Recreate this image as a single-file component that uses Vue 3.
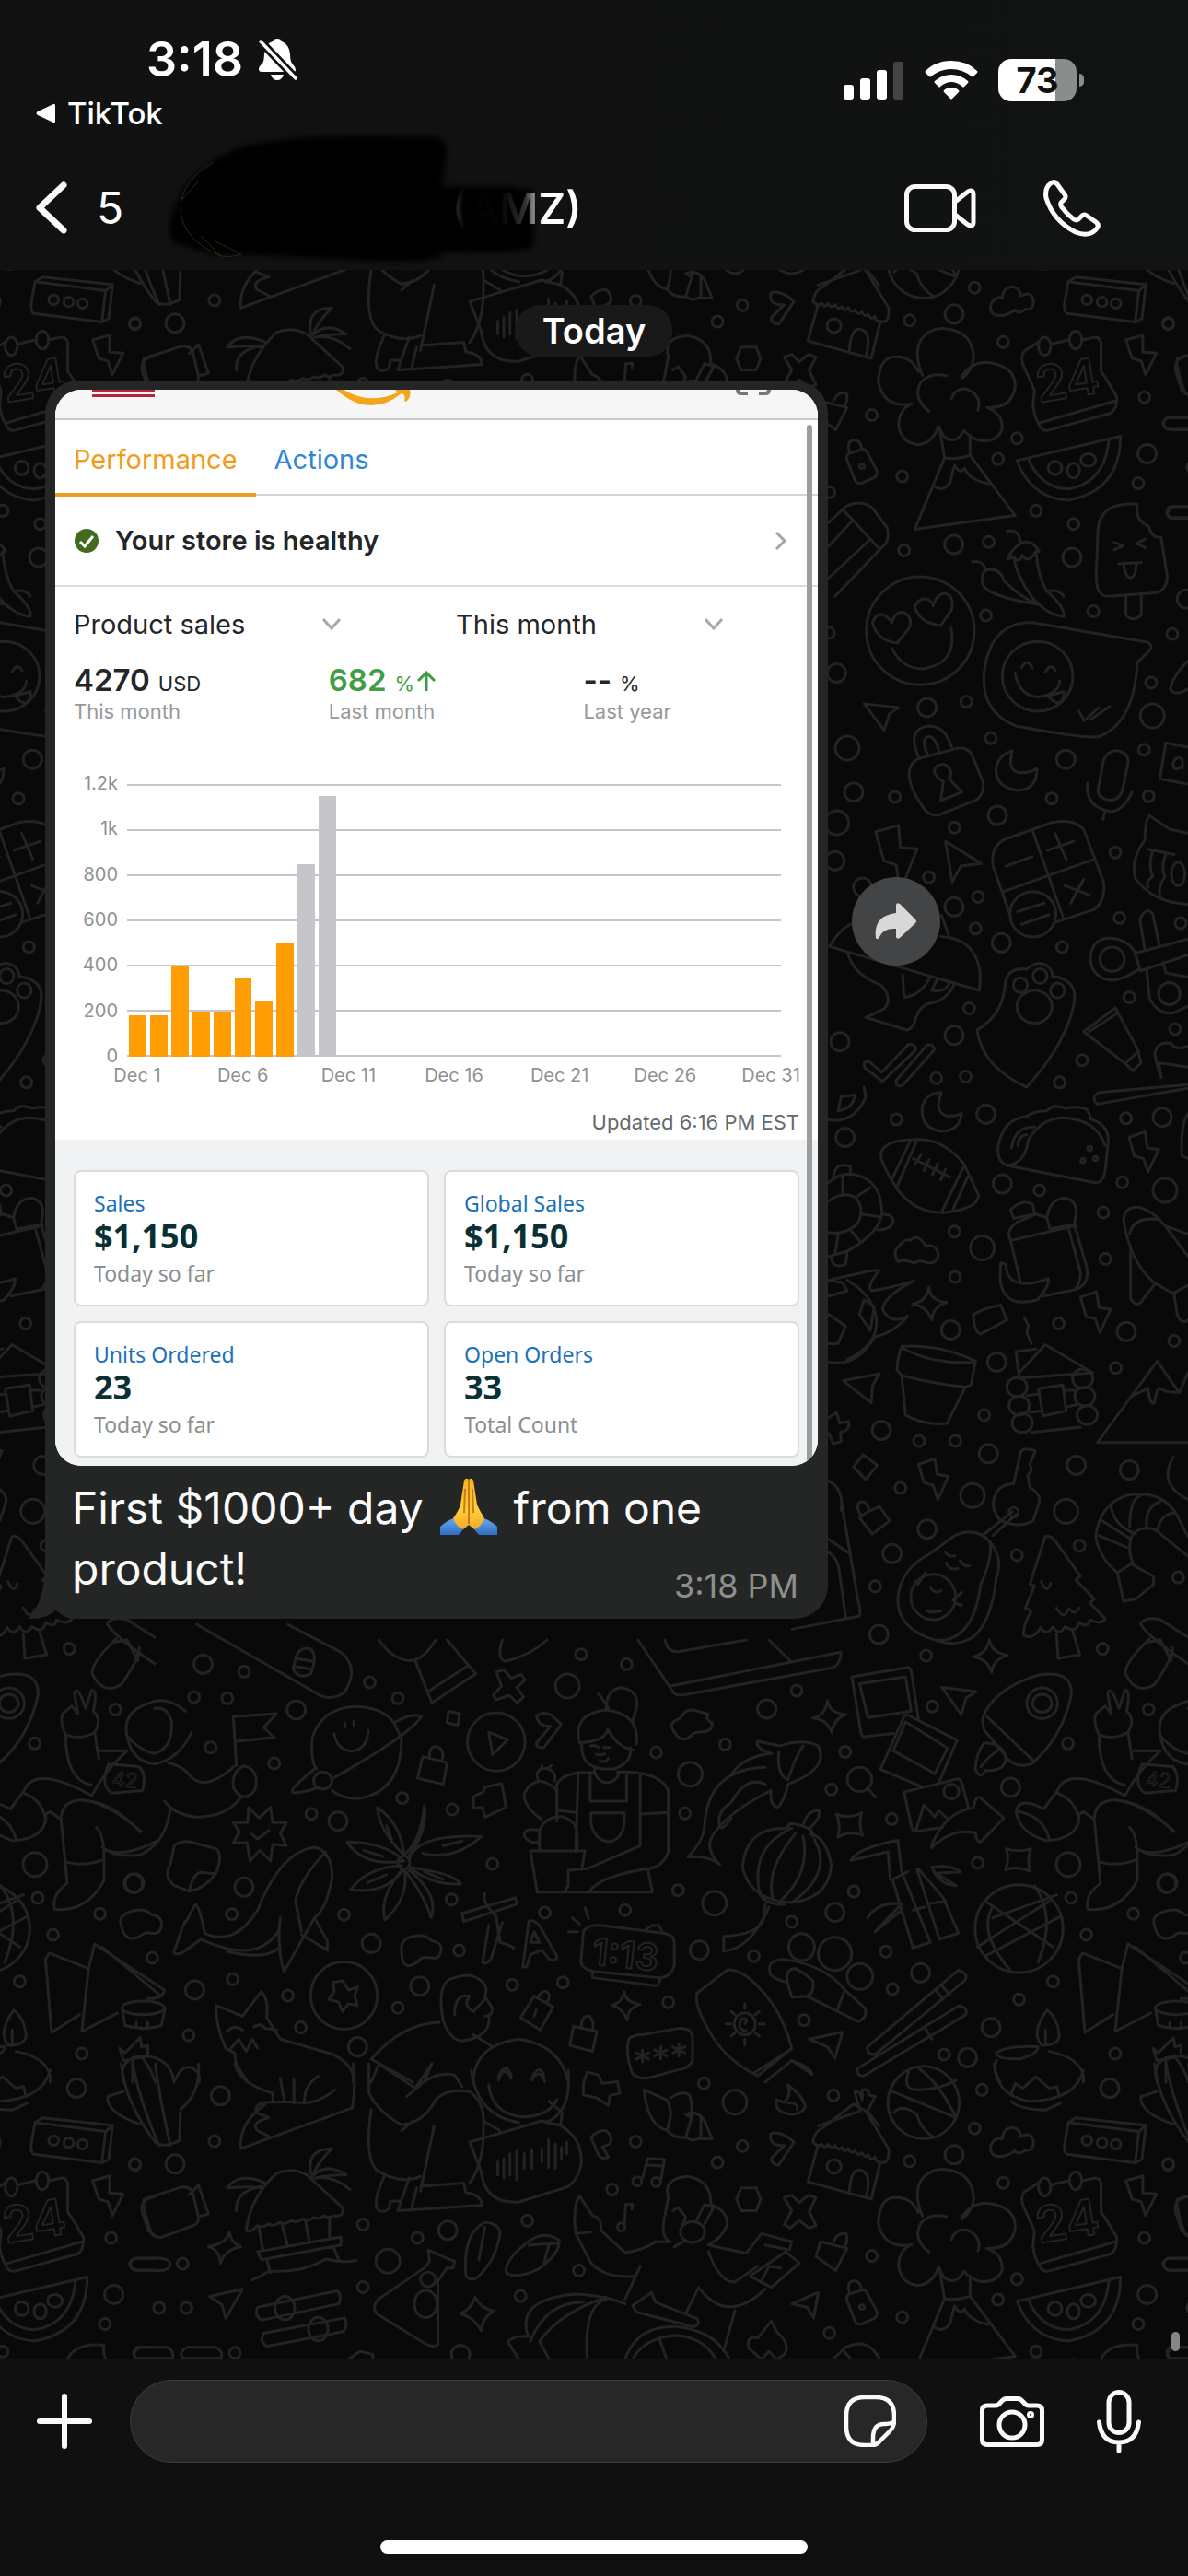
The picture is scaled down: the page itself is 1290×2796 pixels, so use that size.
<template>
  <main class="phone">
    <header class="top">
      <div class="status">
        <div class="status-left">
          <div class="clock">
            <time>3:18</time>
            <!-- 静音铃铛 -->
            <svg class="bell" viewBox="0 0 42 46" aria-hidden="true">
              <path fill="#fff" d="M12 5Q14 4 16 3Q17 0 21 0T26 3Q34 6 35 17Q35 25 38 28Q41 31 41 34Q41 36 38 36H4Q1 36 1 33Q1 30 5 27Q7 24 7 15Z" />
              <path fill="#fff" d="M14 39H28Q26 45 21 45T14 39Z" />
              <path stroke="#111" stroke-width="9" d="M0 0L44 46" />
              <path stroke="#fff" stroke-width="3.4" stroke-linecap="round" d="M3 3L41 43" />
            </svg>
          </div>
          <a class="back-app" href="#">
            <svg viewBox="0 0 22 22" aria-hidden="true"><path fill="#fff" d="M19 1Q21 0 21 3V19Q21 22 19 21L2 13Q-1 11 2 9Z" /></svg>
            <span>TikTok</span>
          </a>
        </div>
        <div class="status-right">
          <svg class="signal" viewBox="0 0 65 42" aria-hidden="true">
            <rect x="0" y="26" width="11" height="16" rx="3" fill="#fff" />
            <rect x="18" y="19" width="11" height="23" rx="3" fill="#fff" />
            <rect x="36" y="10" width="11" height="32" rx="3" fill="#fff" />
            <rect x="54" y="1" width="11" height="41" rx="3" fill="#444" />
          </svg>
          <svg class="wifi" viewBox="0 0 58 42" aria-hidden="true">
            <path fill="#fff" d="M29 0Q46 0 57 11Q58 12 57 13L53 17Q52 18 51 17Q41 9 29 9T7 17Q6 18 5 17L1 13Q0 12 1 11Q12 0 29 0Z" />
            <path fill="#fff" d="M29 15Q39 15 47 22Q48 23 47 24L43 28Q42 29 41 28Q35 23 29 23T17 28Q16 29 15 28L11 24Q10 23 11 22Q19 15 29 15Z" />
            <path fill="#fff" d="M29 29Q34 29 37 32Q38 33 37 34L30 41Q29 42 28 41L21 34Q20 33 21 32Q24 29 29 29Z" />
          </svg>
          <div class="battery"><span>73</span></div>
        </div>
      </div>

      <nav class="nav">
        <button class="icon-btn back" aria-label="Back">
          <svg width="34" height="57" viewBox="0 0 34 57"><path d="M30 4L4 28.5L30 53" stroke-width="7" /></svg>
          <span>5</span>
        </button>
        <a class="contact" href="#">
          <svg class="scribble" viewBox="0 0 410 150" aria-hidden="true">
            <defs>
              <filter id="soft" x="-5%" y="-10%" width="110%" height="120%"><feGaussianBlur stdDeviation="3" /></filter>
            </defs>
            <path filter="url(#soft)" d="M18 58Q45 28 85 14Q150 0 260 4Q305 0 303 20L298 58L366 58L396 62L398 124Q380 132 300 130Q295 142 230 140L120 134L50 132L8 120Q-3 110 4 90Z" />
            <path class="avatar-rim" d="M50 32Q14 52 14 84Q16 116 58 134Q68 136 80 132M16 72L34 52M52 118L80 132M36 112L58 134" />
          </svg>
          <span class="contact-name">(AMZ)</span>
        </a>
        <button class="icon-btn" aria-label="Video call">
          <svg width="78" height="52" viewBox="0 0 78 52"><rect x="2.5" y="2.5" width="52" height="47" rx="9" /><path d="M55 19L69 8Q75 5 75 11V41Q75 47 69 44L55 33" /></svg>
        </button>
        <button class="icon-btn" aria-label="Voice call">
          <svg width="62" height="62" viewBox="0 0 62 62"><path d="M8 4Q12 1 15 5L23 16Q25 19 23 21L19 25Q18 27 20 30Q26 38 33 43Q36 45 38 43L42 39Q44 37 47 39L57 46Q61 49 58 53Q50 63 35 57Q11 45 3 20Q1 9 8 4Z" /></svg>
        </button>
      </nav>
    </header>

    <section class="chat">
      <!-- 聊天背景线稿：一块图案，上下左右平铺 -->
      <svg class="wallpaper" viewBox="0 293 1290 2268" preserveAspectRatio="xMidYMin slice" aria-hidden="true">
        <defs>
          <g id="tile">
            <g v-for="sheet in sheets" :key="sheet.id">
              <g :transform="`translate(${sheet.x} ${sheet.y}) scale(${sheet.sx} ${sheet.sy})`">
                <path v-for="(d, i) in sheet.paths" :key="i" :d="d" />
                <ellipse v-for="(e, i) in sheet.ovals" :key="i" :cx="e[0]" :cy="e[1]" :rx="e[2]" :ry="e[3]" />
              </g>
              <g v-for="ring in sheet.rings" :key="ring.r">
                <circle
                  v-for="(c, i) in ring.at"
                  :key="i"
                  :cx="sheet.x + c[0] * sheet.sx"
                  :cy="sheet.y + c[1] * sheet.sy"
                  :r="ring.r"
                />
              </g>
            </g>
            <text x="1128" y="437" font-size="54" transform="rotate(-9 1128 437)">24</text>
            <text class="thin" x="1243" y="1938" font-size="22" transform="rotate(6 1243 1938)">42</text>
            <text x="642" y="2132" font-size="40" transform="rotate(6 642 2132)">1:13</text>
          </g>
        </defs>
        <use v-for="(o, i) in offsets" :key="i" href="#tile" :x="o[0]" :y="o[1]" />
      </svg>

      <div class="day">Today</div>

      <div class="message">
        <article class="bubble">
          <svg class="tail" viewBox="0 0 50 60" aria-hidden="true"><path fill="#242625" d="M18 0Q18 40 0 60Q22 60 30 50Q38 60 50 60V0Z" /></svg>
          <div class="photo">
            <div class="brand">
              <span class="flag"></span>
              <svg class="smile" viewBox="0 0 82 18" aria-hidden="true"><path fill="#f3a51c" d="M0 0H8Q36 17 67 3L64 0H80Q82 8 76 13L74 12Q76 5 71 4Q36 32 0 0Z" /></svg>
              <svg class="scan" viewBox="0 0 38 6" aria-hidden="true"><path fill="none" stroke="#777" stroke-width="4" d="M2 0Q2 4 6 4H13M25 4H32Q36 4 36 0" /></svg>
            </div>
            <div class="tabs">
              <button class="tab on">Performance</button>
              <button class="tab">Actions</button>
            </div>
            <a class="health" href="#">
              <svg width="26" height="26" viewBox="0 0 26 26" aria-hidden="true"><circle cx="13" cy="13" r="13" fill="#426b1f" /><path d="M6 14L11 19L20 8" fill="none" stroke="#fff" stroke-width="3" /></svg>
              <span>Your store is healthy</span>
              <svg class="go" width="14" height="22" viewBox="0 0 14 22" aria-hidden="true"><path d="M2 2L11 11L2 20" fill="none" stroke="#a5a5a5" stroke-width="3" /></svg>
            </a>
            <div class="filters">
              <label v-for="f in filters" :key="f" class="filter">
                <select :aria-label="f"><option>{{ f }}</option></select>
                <svg width="20" height="13" viewBox="0 0 20 13" aria-hidden="true"><path d="M1 1L10 11L19 1" fill="none" stroke="#a8a8a8" stroke-width="3" /></svg>
              </label>
            </div>
            <div class="metrics">
              <div v-for="m in metrics" :key="m.note" class="metric">
                <p class="figure" :class="{ up: m.up }">
                  <b>{{ m.value }}</b> <small>{{ m.unit }}</small>
                  <svg v-if="m.up" width="20" height="22" viewBox="0 0 20 22" aria-hidden="true"><path d="M10 22V3M1 11L10 2L19 11" fill="none" stroke="#3f9e45" stroke-width="3" /></svg>
                </p>
                <p class="note">{{ m.note }}</p>
              </div>
            </div>
            <div class="chart">
              <div class="y-axis"><span v-for="y in yLabels" :key="y">{{ y }}</span></div>
              <div class="plot">
                <i v-for="y in yLabels" :key="y" class="line"></i>
                <div class="bars">
                  <div v-for="(v, i) in sales" :key="i" class="bar" :class="{ grey: i > 7 }" :style="{ height: v / 12 + '%' }"></div>
                </div>
              </div>
              <div class="x-axis"><span v-for="x in xLabels" :key="x">{{ x }}</span></div>
            </div>
            <p class="updated">Updated 6:16 PM EST</p>
            <div class="cards">
              <div v-for="c in cards" :key="c.title" class="card">
                <a href="#">{{ c.title }}</a>
                <strong>{{ c.value }}</strong>
                <span>{{ c.note }}</span>
              </div>
            </div>
            <span class="photo-scroll"></span>
          </div>
          <p class="caption">
            <span>First $1000+ day</span>
            <svg class="pray" viewBox="0 0 62 62" role="img" aria-label="🙏">
              <defs>
                <linearGradient id="skin" x2="0" y2="1"><stop stop-color="#f7b31c" /><stop offset=".6" stop-color="#ffcf3a" /><stop offset="1" stop-color="#f4a92a" /></linearGradient>
                <linearGradient id="cuff" x2="0" y2="1"><stop stop-color="#6aa9ee" /><stop offset="1" stop-color="#2d6cc0" /></linearGradient>
              </defs>
              <path fill="url(#cuff)" d="M0 53Q8 46 15 44L25 56L20 62H0ZM62 53Q54 46 47 44L37 56L42 62H62Z" />
              <path fill="url(#skin)" d="M26 3Q28-1 31 2Q34-1 36 3L40 29Q43 36 48 44Q45 53 37 56L31 51L25 56Q17 53 14 44Q20 36 22 29Z" />
              <path fill="none" stroke="#c9791a" stroke-width="2" d="M31 2V50M27 12L26 38M35 12L36 38" />
            </svg>
            <span>from one</span> <span>product!</span>
          </p>
          <time class="sent">3:18 PM</time>
        </article>
        <button class="forward" aria-label="Forward">
          <svg width="46" height="40" viewBox="0 0 46 40"><path fill="#d9d9da" d="M23 2Q24-1 27 1L44 18Q46 20 44 22L27 38Q24 40 23 37V28Q9 27 5 37Q3 41 1 38Q-2 14 23 11Z" /></svg>
        </button>
      </div>
      <span class="chat-scroll"></span>
    </section>

    <footer class="bottom">
      <div class="composer">
        <button class="icon-btn" aria-label="Attach">
          <svg width="60" height="60" viewBox="0 0 60 60"><path d="M30 3V57M3 30H57" stroke-width="6" /></svg>
        </button>
        <div class="field">
          <input type="text" aria-label="Message" />
          <button class="icon-btn" aria-label="Stickers">
            <svg width="56" height="56" viewBox="0 0 56 56"><path d="M30 54H22Q2 54 2 34V22Q2 2 22 2H34Q54 2 54 22V28Q54 34 49 39L39 49Q35 54 30 54ZM31 54V46Q31 31 43 31Q51 31 54 28" stroke-width="4.5" /></svg>
          </button>
        </div>
        <button class="icon-btn" aria-label="Camera">
          <svg width="70" height="55" viewBox="0 0 70 55"><path d="M8 10H17Q20 10 22 7L24 5Q26 2.500 29 2.500H41Q44 2.500 46 5L48 7Q50 10 53 10H62Q67.500 10 67.500 15V47Q67.500 52.500 62 52.500H8Q2.500 52.500 2.500 47V15Q2.500 10 8 10Z" /><circle cx="35" cy="31" r="14" /><circle cx="55" cy="20" r="1.500" /></svg>
        </button>
        <button class="icon-btn" aria-label="Record">
          <svg width="48" height="68" viewBox="0 0 48 68"><rect x="13" y="2.500" width="22" height="44" rx="11" /><path d="M2.500 35Q5 57 24 57T45.500 35M24 58V66" /></svg>
        </button>
      </div>
      <div class="home"></div>
    </footer>
  </main>
</template>

<script setup>
const filters = ['Product sales', 'This month']

const metrics = [
  { value: '4270', unit: 'USD', note: 'This month' },
  { value: '682', unit: '%', note: 'Last month', up: true },
  { value: '--', unit: '%', note: 'Last year' }
]

const yLabels = ['1.2k', '1k', '800', '600', '400', '200', '0']
const xLabels = ['Dec 1', 'Dec 6', 'Dec 11', 'Dec 16', 'Dec 21', 'Dec 26', 'Dec 31']
// 当月每日销售额，后面的日期还没有数据
const sales = [185, 185, 400, 200, 200, 350, 250, 500, 850, 1150, ...Array(21).fill(0)]

const cards = [
  { title: 'Sales', value: '$1,150', note: 'Today so far' },
  { title: 'Global Sales', value: '$1,150', note: 'Today so far' },
  { title: 'Units Ordered', value: '23', note: 'Today so far' },
  { title: 'Open Orders', value: '33', note: 'Total Count' }
]

// 图案每块 1122 x 1998
const offsets = [
  [0, 0], [-1122, 0], [1122, 0],
  [0, -1998], [-1122, -1998], [1122, -1998],
  [0, 1998], [-1122, 1998]
]

const sheets = [
  {
    id: 'sky',
    x: 860, y: 280, sx: 0.3333, sy: 0.574,
    paths: [
      // house
      'M68 82Q75 60 100 55L200 10L240 23L315 95Q318 125 290 120Q275 122 270 110Q258 120 248 106Q236 114 228 102Q214 110 205 98Q192 106 184 94Q172 104 162 92Q150 100 140 88Q128 98 118 86Q106 96 98 86Q82 92 68 82M85 88L52 157L258 190L288 120M187 178Q190 130 225 135Q260 140 242 185',
      // cloud
      'M660 108Q640 100 650 85Q665 72 685 76Q690 52 720 55Q745 57 745 72Q780 60 787 82Q785 100 760 97Q740 108 725 98Q700 112 660 108Z',
      'M900 45L925 36L1153 50L1140 115L1118 121L895 105Q885 100 888 85L900 45L1130 62L1118 121M1130 62L1153 50',
      // volcano
      'M425 222Q395 180 420 155Q450 130 505 134Q590 140 592 190Q585 215 555 227M552 225Q590 190 660 200Q730 210 727 245Q715 285 635 283Q690 295 684 325Q665 350 610 345Q580 340 560 326Q535 355 495 338L477 318Q460 350 410 353Q355 350 347 315Q350 285 390 276Q300 285 281 235Q285 185 340 187Q390 187 412 215M503 223Q450 215 420 235Q390 265 447 290M520 266Q530 245 570 248Q620 260 606 288',
      'M480 320L497 378L400 513L727 487L580 373V335M497 378Q540 382 580 373M460 430Q490 445 515 425Q525 400 530 392Q545 410 562 398Q580 420 640 427',
      // calendar
      'M805 158L755 177Q743 190 755 205L790 250L785 280Q790 300 805 315Q815 328 835 326L1040 293Q1060 285 1058 262L1020 225L1007 215V160Q1000 148 985 150L945 155M845 163L900 155M805 312L1055 270',
      'M733 383Q780 455 900 458Q1070 440 1070 337L733 383M770 380Q810 435 900 437Q1020 425 1033 342',
      'M1088 155L1143 146V178L1187 180L1152 221L1138 195L1108 190Z',
      'M178 380L205 420Q212 428 225 426L270 415Q280 410 275 400L245 368Q238 360 228 362L185 370Q176 374 178 380M188 368Q175 345 205 344Q228 348 226 362',
      'M120 500L175 470Q230 455 265 475L310 510Q318 530 305 540L140 640M165 475L285 550M120 545L195 498M120 605L250 535',
      // heart eyes
      'M262 690Q275 670 300 675Q320 682 325 690Q335 668 365 670Q395 680 382 700L343 728Q280 725 262 690ZM400 660Q413 642 440 645Q458 650 460 658Q470 635 500 634Q530 640 520 665L485 695Q415 690 400 660ZM325 738Q360 778 430 777Q540 765 518 700',
      // chili
      'M587 575Q620 570 632 590Q612 600 622 618Q640 640 800 655M632 590Q680 585 690 610Q740 640 800 655M700 517Q740 510 745 540Q715 550 702 570L722 565Q730 600 780 640Q830 675 885 678Q890 660 830 630Q800 600 795 555L805 555Q780 530 745 540M722 565Q740 580 750 562Q770 580 795 555M832 630Q870 625 885 640',
      // popsicle
      'M1125 466Q1010 460 997 510L991 600Q990 640 1030 640L1190 633Q1225 625 1222 600L1202 528Q1170 530 1163 508Q1115 495 1125 466M1088 640V675Q1110 690 1138 675V638M1050 538L1080 544L1050 552M1150 532L1122 540L1152 548M1065 578L1138 576M1080 578Q1085 605 1105 605Q1122 600 1122 577',
      'M780 689L1160 727Q1180 735 1160 745L1125 765Q1115 880 1000 905Q960 910 730 885Q620 860 625 790Q640 690 780 689M727 785Q740 828 800 830Q870 825 872 800M748 775Q765 755 783 775M825 783Q843 765 858 780M835 828L885 820Q890 835 870 842Q850 840 835 828M935 857L952 875L1000 850M972 873L1035 848',
      'M235 843L347 850L318 862L300 893Z',
      // padlock
      'M383 985Q375 960 410 947L540 927Q570 925 585 938L622 990Q628 1015 600 1025L480 1053Q450 1055 435 1045Q390 1010 383 985M415 947Q370 890 445 885Q500 885 520 925M443 940Q415 905 450 905Q470 910 478 932M493 990Q450 975 470 962Q500 950 517 970Q520 980 512 985L553 1010L485 1026Z',
      'M718 932Q700 970 740 973Q770 975 798 965Q800 1005 735 1007Q660 1000 665 965Q675 938 718 932Z',
      'M1015 950Q1030 930 1060 932Q1098 935 1095 955L1075 1010Q1060 1028 1030 1025Q995 1020 997 1005ZM962 993Q955 1040 1040 1047Q1080 1045 1108 1010M1020 1047L1013 1062',
      'M345 1172L340 1148L300 1140L272 1085L347 1073L353 1115L408 1117L370 1172',
      'M500 1103L617 1145L550 1150L522 1180Z',
      // calculator
      'M860 1256L985 1232Q1022 1215 1015 1180L950 1080Q920 1060 850 1067L700 1098Q645 1110 655 1150L715 1250M690 1198L980 1138M785 1085L885 1250M697 1150L783 1132M833 1120L918 1103M857 1088L893 1137M890 1187L970 1205M950 1175L908 1220M735 1236L822 1220M748 1260L838 1242',
      'M200 1258Q160 1265 122 1302L610 1385Q625 1330 570 1300Q540 1285 485 1283M487 1243L510 1280M182 1315Q200 1355 290 1375Q330 1400 300 1420L240 1436L375 1460Q395 1458 405 1435Q420 1410 460 1408Q510 1400 527 1375M360 1355L365 1398Q420 1395 450 1360M455 1385L475 1362L515 1370Q500 1390 455 1385',
      'M240 1533Q225 1520 250 1519L292 1540L380 1487Q405 1485 403 1498L295 1557ZM340 1555L440 1488Q465 1487 463 1498L360 1565Q335 1568 340 1555',
      'M603 1460Q690 1430 695 1370Q705 1340 765 1345Q800 1325 835 1340Q850 1350 848 1358Q930 1365 920 1405Q900 1480 765 1568Q620 1530 603 1460',
      // cat
      'M1290 1088L1230 1080L1165 1055Q1150 1060 1150 1100Q1100 1140 1120 1175Q1180 1220 1290 1222M1160 1118L1245 1128M1175 1120Q1160 1150 1175 1170Q1150 1180 1160 1190M1220 1125Q1200 1150 1215 1170Q1190 1190 1200 1208',
      'M1290 925L1218 917L1198 985L1290 995M1272 960Q1240 975 1242 955Q1250 940 1272 948V965',
      // scissors
      'M1130 1345Q1080 1365 1040 1366Q970 1360 972 1320Q980 1285 1040 1286Q1100 1290 1118 1315L1290 1288M1118 1315L1135 1348L1290 1318M1150 1310L1133 1250Q1155 1225 1175 1240L1197 1300M1155 1345L1165 1400Q1190 1430 1240 1428L1290 1415M1210 1332L1218 1352L1290 1360',
      'M950 1463L1053 1418L1125 1495L1137 1522L1110 1537L1085 1523ZM968 1463L1060 1428M1130 1500L1088 1522',
      'M1290 1490Q1250 1500 1235 1485Q1190 1480 1182 1505Q1185 1520 1203 1550L1195 1522L1290 1530',
      'M1290 185Q1240 190 1250 215L1270 250L1290 258M1290 302H1222Q1200 312 1222 324H1290M1290 470H1232Q1210 480 1232 492H1290M1290 762Q1240 790 1232 815Q1250 830 1290 815'
    ],
    ovals: [
      [137, 128, 23, 13], [961, 79, 16, 9], [1010, 83, 16, 9], [1055, 86, 16, 9],
      [823, 167, 20, 17], [924, 155, 20, 17], [857, 397, 22, 13], [917, 402, 20, 14], [965, 382, 24, 12],
      [228, 394, 8, 4], [418, 705, 176, 102], [800, 791, 115, 66], [785, 1241, 75, 43],
      [744, 1375, 23, 14], [808, 1358, 23, 14], [865, 1385, 23, 14], [790, 1416, 57, 31],
      [1258, 1165, 22, 22], [1043, 1326, 40, 23], [1229, 1391, 35, 21]
    ],
    rings: [
      { r: 6, at: [[595, 56], [383, 118], [688, 159], [1226, 125], [260, 297], [359, 413], [733, 341], [671, 380], [1148, 263], [1128, 426], [795, 478], [917, 503], [365, 553], [641, 537], [632, 676], [982, 668], [1239, 711], [568, 839], [1170, 803], [648, 908], [335, 1019], [846, 1022], [1147, 930], [1162, 1018], [529, 1077], [1053, 1124], [446, 1171], [606, 1208], [598, 1268], [880, 1303], [1067, 1248], [577, 1419], [1099, 1398], [945, 1517], [470, 1551], [566, 1548], [1266, 1258], [1248, 1458], [872, 1559], [122, 443], [120, 709]] },
      { r: 10, at: [[528, 106], [527, 542], [912, 566], [1157, 370], [440, 850], [892, 948], [201, 1010], [669, 1054], [528, 1227], [682, 1295], [528, 1470], [156, 1482], [145, 785], [140, 1140], [230, 1190], [1285, 645]] },
      { r: 13, at: [[180, 927], [1174, 866], [146, 1068]] }
    ]
  },
  {
    id: 'woods',
    x: 860, y: 1180, sx: 0.3333, sy: 0.574,
    paths: [
      'M487 10Q460 50 510 55Q535 55 553 50Q545 85 480 83Q415 75 425 35Q440 10 487 10Z',
      'M120 62Q200 70 240 20L235 0M150 45L160 18L205 15Q200 40 150 45Z',
      'M1290 -5L1000 10Q970 20 995 32L1290 2',
      // football
      'M290 125Q300 100 400 99Q490 95 560 145L608 205Q605 230 500 237Q400 240 340 190Q285 140 290 125M325 175L385 102M343 187L405 103M490 233L558 152M525 230L572 170M395 135L515 170M402 145L420 128M430 157L447 137M457 165L475 145M485 175L500 155',
      // taco
      'M700 148Q665 140 672 110Q690 60 765 55Q790 45 830 45Q850 30 890 40Q930 35 960 42Q975 55 970 60Q1035 70 1030 105L1020 160Q1010 185 980 180L700 148Q760 145 770 100Q810 60 880 58Q990 60 1020 110M715 115Q725 75 790 75M735 110Q740 90 765 90',
      'M1098 95L1150 84L1158 115L1195 118L1160 160L1145 135L1115 130ZM940 397L992 387L1000 417L1038 420L1003 464L988 438L958 434ZM412 713L465 703L473 732L510 736L475 780L460 753L430 748Z',
      // backpack and banana
      'M745 370L712 290Q695 270 735 255L795 240L830 247M920 260L960 340Q970 370 930 382L820 395M712 290L925 262M900 265L940 350Q940 370 925 380M712 232L722 248L790 240L785 222Q750 210 712 232ZM830 247Q840 210 890 210Q930 215 925 240L920 260L840 268ZM680 332L697 335Q700 390 835 362Q840 375 800 402Q690 420 678 365Z',
      'M345 330Q325 310 350 300Q370 285 385 290Q410 275 435 300Q470 295 477 318Q470 335 440 332Q410 325 400 333Q370 325 345 330Z',
      'M446 378Q450 405 503 407Q460 415 455 440Q440 415 392 410Q440 405 446 378ZM643 1045Q650 1070 702 1074Q655 1082 650 1107Q640 1082 590 1077Q635 1072 643 1045ZM115 1160Q125 1185 176 1186Q135 1195 130 1221Q115 1195 67 1193Q110 1188 115 1160Z',
      // turtle
      'M120 180Q170 155 230 170Q290 185 293 235Q290 275 180 310L120 320M120 215Q170 195 210 210Q240 235 210 260Q170 280 120 275M135 170Q140 140 190 150V165M293 240Q330 240 330 255Q320 270 280 270M128 320Q130 345 175 335L180 310M165 170V205M215 205L255 190M225 240L285 245M190 270L220 290M150 280L140 315',
      'M120 365L220 352Q260 345 283 347Q240 380 260 385Q320 380 395 367Q300 395 295 420Q320 450 377 433Q330 465 270 472Q210 530 120 520M180 365Q280 400 275 450Q270 490 180 515M120 430L175 452L150 485H120M220 430L235 402L268 415L255 460ZM120 365L165 370L180 385L120 395',
      'M590 430L625 420Q650 415 680 412L700 440L615 467Q595 465 590 430Z',
      // pot
      'M358 490Q345 505 342 535L357 545L370 620Q430 640 505 636L565 567L583 563L598 518Q480 485 358 490M357 545Q450 560 565 567M358 493Q460 525 595 520',
      'M167 555L285 542L262 565L258 597ZM488 1135L600 1143L567 1155L552 1187Z',
      // log cabin
      'M740 540L825 487L980 540L740 550L730 500L795 495M757 437L770 450L765 465L780 485M803 570L882 563L893 612L818 622ZM765 583L805 580M885 573H920M775 615L815 612M893 605L930 600M780 653L940 643',
      'M1290 540L1262 578L1190 518L995 672H1290M1110 583L1160 570Q1165 600 1180 598Q1190 560 1205 572Q1240 580 1262 575',
      'M120 625L145 615L155 635L185 632Q190 650 158 652L160 670L135 675L120 655M200 718L232 695L278 715L240 742ZM220 815L262 845L318 820L285 793L240 805ZM228 812Q205 795 220 785Q245 780 250 800',
      // key
      'M722 750L745 690Q755 680 793 688L775 712L780 725L768 735L775 757Q815 770 803 790L785 820Q740 835 680 820Q650 800 657 780Q670 750 722 750M620 848L718 803M655 848L730 808',
      // avocado
      'M530 848Q600 830 645 860Q655 890 615 940Q590 1050 470 1046Q340 1025 345 965Q355 910 450 882ZM645 860Q690 890 665 930Q650 1010 590 1040Q530 1060 470 1046M500 880Q515 890 530 886M548 895Q560 908 578 905M502 900Q515 915 540 910M450 945Q465 960 485 952M440 990Q460 995 485 990M525 970L553 955M530 975L553 980M400 935L410 940L435 918',
      // pine tree
      'M775 940L825 850Q840 845 860 860L940 925L925 932L985 968L970 975L1020 1005Q1010 1018 970 1007Q965 1025 935 1012Q925 1035 890 1020Q870 1040 850 1020Q830 1040 810 1022Q790 1045 755 1037Q750 1020 780 990L760 985L790 943ZM812 935Q830 960 843 938M862 985Q885 1010 900 987M905 987Q920 1000 935 985M862 1035L867 1080L938 1073L915 1030',
      // shrimp
      'M1290 850L1250 805Q1200 760 1090 772Q1000 790 990 850Q1000 890 1060 918L1110 900Q1090 870 1110 845Q1150 825 1190 840L1290 887M1060 918L1080 972L1120 968L1178 940V925L1110 903M1000 848L1090 870M1010 820L1105 855M1040 795Q1050 830 1120 845M1100 830Q1100 780 1135 772M1155 830Q1150 795 1200 783M1190 840Q1200 805 1250 805M1242 700Q1190 750 1290 780',
      // airplane
      'M1290 320L1215 262Q1180 235 1130 227Q1085 225 1080 250Q1100 330 1180 370L1240 390L1290 375M1103 300V400Q1120 415 1135 408L1185 370M1215 262L1290 278M1100 278Q1110 245 1190 250M1245 392L1255 430Q1270 450 1290 440M1290 50Q1265 70 1270 130L1290 135',
      'M1290 1040L1200 1007Q1150 1000 1135 1015Q1160 1040 1290 1090M1165 1043Q1080 1090 1087 1110Q1120 1150 1180 1130Q1230 1090 1235 1070M1155 1050L1200 1045L1235 1085L1240 1060',
      // astronaut
      'M1000 1225Q980 1200 990 1185L1020 1170L1040 1185M1040 1185L1028 1145Q1040 1130 1065 1175L1085 1140Q1105 1140 1090 1180Q1120 1195 1095 1220Q1050 1235 1000 1225Q1000 1310 1085 1320M1095 1222L1108 1270M1110 1255L1200 1255Q1130 1290 1085 1340Q900 1280 865 1330L820 1365Q740 1340 730 1370Q740 1410 830 1425Q940 1420 935 1375L950 1370L985 1385M865 1335Q930 1350 935 1390M740 1370Q820 1380 838 1422M1245 1407Q1130 1350 1050 1348Q985 1350 985 1385L1005 1505Q950 1530 965 1555Q1070 1560 1125 1500V1445Q1120 1410 1100 1400M1000 1465Q1060 1475 1125 1460M1125 1440Q1180 1460 1300 1425M1390 1180Q1330 1150 1270 1165Q1190 1180 1198 1220Q1210 1275 1290 1280Q1370 1270 1410 1220M1198 1225Q1240 1255 1290 1260Q1350 1250 1345 1200Q1330 1170 1290 1175M1140 1280L1240 1285Q1265 1300 1250 1330L1150 1335Q1110 1320 1140 1280Z',
      'M0 1025L220 1000Q225 990 215 970L160 780M120 745Q170 760 160 800M120 855L190 883M120 880Q150 890 155 920L175 1003',
      // photos
      'M412 1195L390 1110Q388 1100 380 1097L195 1115L225 1222Q230 1230 240 1228L330 1222M220 1128L370 1115L388 1180L247 1192ZM420 1322L288 1290L365 1190Q370 1186 380 1188L538 1235L480 1313M330 1255L370 1200L507 1250L465 1298ZM575 1363L555 1320Q552 1310 540 1308L365 1333L390 1400Q395 1408 405 1407L490 1400M405 1403L430 1357L465 1380L478 1368L510 1385',
      'M455 1433Q500 1370 590 1363L600 1345Q610 1340 620 1347L690 1382L615 1427Q600 1428 598 1410Q520 1400 455 1438Z',
      // rocket
      'M620 1195Q650 1140 800 1112Q915 1100 910 1150Q880 1230 780 1280Q720 1290 690 1260L625 1215ZM635 1190L785 1273M625 1240Q600 1260 597 1290Q615 1310 630 1292Q690 1295 697 1270Q690 1240 625 1240M615 1285Q640 1265 680 1250',
      'M245 1325L273 1343M145 1375Q185 1385 227 1372Q215 1395 230 1415Q190 1405 150 1418Q160 1395 145 1375ZM697 1440Q740 1448 778 1440Q765 1460 775 1483Q735 1472 695 1480Q710 1460 697 1440Z'
    ],
    ovals: [
      [948, 139, 7, 4], [970, 116, 7, 4], [989, 135, 7, 4],
      [733, 567, 33, 18], [740, 602, 33, 18], [750, 635, 33, 18], [947, 551, 33, 18], [954, 585, 33, 18], [962, 620, 33, 18],
      [722, 804, 15, 9], [460, 964, 73, 43], [519, 1332, 25, 14], [815, 1165, 50, 29], [815, 1165, 31, 17], [220, 1309, 40, 23]
    ],
    rings: [
      { r: 6, at: [[340, 61], [1088, 59], [806, 195], [1076, 180], [529, 273], [1014, 237], [531, 359], [1021, 325], [869, 447], [1245, 480], [1055, 531], [626, 620], [414, 669], [532, 669], [353, 758], [937, 867], [1258, 927], [271, 944], [733, 885], [437, 1075], [1012, 1062], [457, 1171], [1162, 1177], [15, 1141], [173, 1257], [899, 1241], [128, 1328], [325, 1384], [605, 1467], [909, 1533], [201, 1521]] },
      { r: 10, at: [[173, 95], [632, 51], [1206, 57], [685, 183], [517, 459], [667, 520], [1089, 462], [291, 649], [640, 693], [926, 715], [1099, 724], [440, 836], [326, 882], [283, 1035], [712, 1324], [1224, 1505]] },
      { r: 13, at: [[620, 304], [1215, 195], [588, 772], [893, 802], [900, 1470]] }
    ]
  },
  {
    id: 'garden',
    x: 0, y: 1780, sx: 0.8227, sy: 0.3333,
    paths: [
      'M260 -50L415 170Q435 205 455 170Q475 90 450 40L380 -50M390 60Q395 20 410 30Q420 50 410 110Q395 130 387 95ZM390 60L413 70M387 85L411 95',
      'M500 0Q520 70 545 67Q560 60 575 0M548 67L570 205L628 110L590 0M567 165L617 85M663 0Q655 60 667 70Q700 50 722 0',
      'M655 105L665 97L675 125L688 112L693 130L682 155L691 185L683 205L672 180L655 195L651 180L662 150Z',
      'M842 0L890 175Q895 183 905 178L1100 90Q1110 75 1110 40L885 150M878 0Q880 40 895 38L985 0M1015 0L1043 68',
      'M322 410Q305 430 308 480Q315 515 325 510Q340 500 338 450Q335 415 322 410M312 410L308 250L365 240L348 285L362 318L312 330',
      'M222 400Q240 410 250 440Q270 500 310 410M217 525Q230 570 260 577Q300 575 318 512M185 625Q150 530 110 522M225 545Q220 660 185 700Q150 710 135 675',
      // planet
      'M520 270Q505 220 470 217Q425 220 412 320Q410 400 418 420M438 490Q450 515 470 517Q530 500 530 320M415 420Q380 490 387 497Q400 500 420 480M440 450Q540 310 556 250Q545 235 520 270L530 320M441 305Q445 360 465 362Q485 355 486 295M455 270V285M467 265V280',
      'M645 300L670 325L650 373ZM558 380L590 400L585 470L551 450ZM567 385Q565 345 577 347Q588 360 583 395M592 232L607 240L604 278L590 270Z',
      'M708 250Q715 230 728 245L741 275L718 350Q708 355 708 335L727 280Q712 285 708 250',
      // gardener
      'M765 335Q755 240 800 228Q845 240 840 340M800 228Q800 160 820 155Q845 165 840 225L835 265M790 175L803 220M765 335Q800 330 802 290Q815 350 835 358M768 335Q765 410 795 420H810Q835 400 832 350M780 345Q785 340 790 350M797 350H806M787 372Q792 376 798 372M792 395Q800 400 803 385M785 417V432Q745 425 735 470V590M815 430Q870 425 882 490V690Q875 740 855 745Q790 770 778 820M785 432Q790 465 802 465Q815 460 817 432M763 432L760 690M845 440V670L775 745L750 750V800L745 820M779 440V525H827V440M735 555L760 562M845 567L882 562M780 563H824V600Q820 655 802 657Q785 650 780 600ZM768 745L772 687H700L709 821H861L855 745',
      'M712 687V620Q720 575 740 575Q762 585 762 640V687M715 585Q690 540 692 500Q700 460 715 460Q735 475 735 500M710 455Q705 420 720 418Q735 425 732 460M712 620Q690 610 692 640Q700 665 710 658M715 415V408M725 415L728 408',
      'M890 300Q880 270 898 255Q905 220 918 230L935 242Q930 260 940 270Q940 300 925 300Q915 300 913 310Q900 340 890 300M625 510L638 495L640 480L662 467L668 545L640 577L637 545L625 548Z',
      // dolphin
      'M1000 330Q995 350 1018 370M1000 330L1030 345Q1060 320 1080 345Q1095 420 1040 470Q1035 530 1025 548Q1015 530 1018 490Q960 560 940 640Q930 680 950 732Q935 700 908 707Q930 650 930 600Q935 420 1010 415M1018 370Q980 380 965 440M1028 365Q1025 440 1040 455Q1050 380 1060 345M1010 470Q985 440 965 530Q945 560 950 610Q955 620 965 580',
      // lantern
      'M1045 615Q985 600 980 740Q990 850 1045 855Q1095 840 1097 730Q1090 640 1070 632M1045 615Q1035 605 1045 598Q1075 610 1073 640M1060 605Q1065 555 1080 555Q1085 575 1070 610M1040 620Q990 680 1003 830M1050 630Q1010 750 1020 840M1060 640Q1070 760 1030 850M1075 650Q1100 760 1045 855M1003 820Q1005 860 1035 862M1010 860L1008 910Q1000 960 955 965V1013Q990 1010 1015 870',
      'M328 545L342 580L357 545L360 595L378 595L370 630L378 670L360 665L357 720L343 685L330 720L326 660L308 660L316 625L308 595L327 595ZM332 632L340 648L355 620',
      'M230 670Q240 650 255 660L285 680Q295 700 285 760Q270 810 250 818L230 800Q215 770 225 730ZM250 815Q255 760 265 757Q280 760 285 762',
      // whale
      'M240 1020Q225 1030 232 1000Q245 900 245 920L258 860Q265 880 270 955Q310 1000 340 880Q370 690 415 675Q440 690 438 780Q430 880 415 905L375 1080Q365 1000 370 905M430 690Q395 780 390 850L398 950M240 1020L265 975Q340 1060 368 945M300 1015Q350 1045 370 1000M398 960L432 1010V980L415 905',
      // flower
      'M533 700Q500 620 498 545Q530 600 533 700Q555 660 560 540Q565 620 540 700M533 720Q480 740 458 658Q510 660 533 720M540 715Q550 630 635 640Q600 720 558 695M530 735Q485 740 463 813Q510 830 533 745M540 740Q600 760 608 795Q570 800 540 740M530 750Q500 840 508 912Q540 840 534 750Q560 830 569 905Q580 830 540 750M510 605L517 650M555 610L550 650M480 685L505 705M585 670L610 655M485 790L510 765M560 755L585 780',
      // bamboo
      'M1175 780L1172 690L1123 718Q1130 680 1185 652L1190 755L1228 985L1205 1003L1178 780L1198 755M1205 880L1220 870M1212 745L1245 840L1265 955L1240 975L1225 860L1210 745M1225 860L1248 850M1230 740Q1255 730 1268 755L1235 760L1262 800Q1240 800 1230 740M1145 905Q1160 850 1190 860L1155 950L1190 880',
      'M1300 850L1390 1000M1290 1000L1385 850M1310 870Q1290 950 1333 1075M1365 800Q1395 900 1370 1050M1310 905L1395 830M1300 1030L1400 900',
      'M610 890L680 840L683 860L612 917ZM640 825Q635 850 655 900L660 985Q680 1000 678 1005M645 930L637 1050Q640 1060 648 1040L663 920M690 1065L698 915Q705 910 712 930L735 1030Q735 1050 725 1040L715 1010L700 1025L695 1065ZM700 985L705 950L712 985Z',
      // alarm clock
      'M770 950Q775 925 795 930L875 955Q890 960 890 985V1060Q885 1100 870 1100L785 1080Q765 1070 767 1040ZM782 1080V1100L868 1127L872 1100M852 945Q858 925 870 930L875 955M755 905L765 925M772 872L777 908M750 950H763',
      'M160 930Q155 900 172 885Q190 870 200 895Q215 900 213 930Q212 960 200 955Q190 950 185 965Q165 990 160 930ZM530 1010Q528 975 545 965Q560 955 570 980Q585 985 582 1015Q580 1040 570 1035Q555 1030 553 1045Q530 1090 530 1010Z',
      // map and bucket
      'M105 1220L68 1278L60 1040L65 1020L117 1070L125 990L217 1140Q215 1170 195 1168M117 1070L108 1275L155 1215M135 1000L210 1155M161 1200L165 1255Q190 1275 213 1255L218 1200M180 1245V1262M195 1245V1260',
      // fox
      'M466 1440Q470 1390 440 1350L370 1300L352 1230Q355 1170 345 1145L320 1225L285 1190Q285 1260 298 1330L310 1345Q308 1380 325 1430M300 1275Q308 1250 320 1270M335 1260Q345 1245 350 1265L365 1270M305 1330L315 1300L325 1340L333 1300L340 1330',
      'M452 1110L460 1140L472 1130L468 1160L472 1190L460 1185L452 1210L447 1180L434 1170L441 1145L440 1115Z',
      'M585 1240Q575 1110 600 1100Q620 1080 635 1110Q645 1130 640 1160L650 1200Q650 1225 640 1225M585 1240Q595 1310 612 1305Q650 1290 645 1220M600 1220Q600 1150 620 1160Q610 1190 625 1210L640 1170M545 1440L490 1365Q530 1250 580 1245M625 1285L650 1325M570 1380L560 1440M625 1440Q625 1320 685 1300Q740 1320 750 1440M500 1380L490 1440M658 1420Q668 1370 675 1420M703 1420Q713 1380 718 1420',
      'M705 1160L730 1195L713 1270L687 1230ZM710 1165Q715 1140 722 1145Q728 1160 722 1180M708 1205L705 1225M757 1258L788 1275L782 1340L752 1320ZM767 1260Q768 1220 778 1225Q785 1245 782 1270M824 1145Q825 1180 845 1187Q828 1200 828 1237Q822 1200 808 1190Q822 1180 824 1145Z',
      // password
      'M830 1300Q835 1285 850 1285L895 1265Q912 1262 914 1290V1370Q910 1395 895 1400L855 1427Q835 1430 833 1400Q825 1340 830 1300ZM848 1335V1375M840 1345L856 1365M840 1365L856 1345M872 1325V1365M864 1335L880 1355M864 1355L880 1335M896 1315V1355M888 1325L904 1345M888 1345L904 1325',
      // surfboard
      'M920 1150L960 1075Q970 1070 985 1095Q1030 1180 1045 1330L1000 1420Q960 1370 940 1290Q915 1190 920 1150M995 1410L1043 1335M1010 1440L1045 1370L1072 1415Q1070 1390 1045 1370M983 1185V1200M983 1300V1318M958 1250H965M1002 1250H1009M965 1210L970 1220M1002 1210L997 1220M965 1290L970 1280M1002 1290L997 1280M983 1250Q990 1230 978 1235Q972 1270 985 1272',
      'M1017 1090Q1010 1040 1035 1040Q1090 1060 1115 1140L1142 1200Q1145 1230 1133 1243L1065 1160L1045 1163L1040 1120Q1035 1070 1050 1070Q1065 1090 1073 1110Q1075 1150 1065 1160M1017 1090Q1025 1110 1040 1115M1115 1140L1105 1205',
      'M1145 1325L1265 1075Q1280 1090 1273 1110L1155 1350Q1143 1350 1145 1325ZM1132 1395L1265 1192Q1278 1195 1275 1220L1140 1420Q1130 1420 1132 1395ZM1235 1140L1245 1170M1220 1260L1230 1300M1243 1125L1253 1155M1068 1300L1112 1277L1102 1362L1092 1325Z',
      // candle bowl
      'M1382 1205Q1360 1280 1375 1320Q1400 1320 1398 1280Q1395 1230 1382 1205M1380 1270V1320M1315 1345Q1330 1320 1370 1325Q1370 1350 1345 1365Q1315 1365 1315 1345M1315 1370Q1310 1400 1320 1440M1385 1340Q1425 1360 1430 1420V1440',
      'M163 1440Q155 1360 190 1355Q225 1360 230 1440M175 1360V1440M158 1330L165 1345L185 1295L187 1325L195 1320V1355L163 1370ZM232 1430Q240 1380 255 1395Q265 1410 263 1440M188 1360Q200 1400 205 1440'
    ],
    ovals: [
      [426, 458, 12, 28], [655, 332, 38, 95], [533, 725, 8, 22], [1345, 940, 58, 143], [189, 1198, 28, 22],
      [454, 1158, 44, 110], [983, 1250, 14, 36], [1058, 1000, 17, 44], [1102, 1022, 22, 54], [1135, 1096, 17, 42]
    ],
    rings: [
      { r: 6, at: [[322, 103], [488, 138], [767, 47], [827, 79], [256, 186], [300, 190], [525, 190], [278, 350], [362, 402], [957, 340], [866, 366], [531, 515], [411, 566], [597, 552], [904, 565], [650, 729], [596, 845], [454, 895], [306, 893], [132, 892], [1127, 819], [895, 815], [1045, 918], [719, 888], [825, 880], [201, 1035], [606, 1011], [70, 960], [995, 1030], [1169, 1015], [676, 1123], [743, 1115], [380, 1158], [307, 1105], [882, 1180], [525, 1198], [397, 1262], [249, 1287], [1178, 1137], [1345, 1171], [1061, 1238], [108, 1347], [26, 1112], [1246, 1350]] },
      { r: 10, at: [[268, 79], [391, 228], [1012, 225], [446, 590], [176, 793], [322, 805], [1102, 887], [490, 988], [554, 1127], [257, 1140], [472, 1325], [1215, 1084], [1308, 1262], [1277, 1360], [923, 1010]] },
      { r: 13, at: [[749, 150], [911, 437], [943, 857]] }
    ]
  },
  {
    id: 'beach',
    x: 0, y: 2240, sx: 0.8227, sy: 0.3546,
    paths: [
      'M310 0Q315 60 360 90V110M370 45L375 110M388 45V120M420 38Q400 70 402 120M442 80Q420 120 402 120Q380 115 355 118Q335 120 338 150L355 165Q330 180 340 205L357 225M466 0Q470 60 465 135L318 260Q315 180 350 125',
      'M160 0Q165 120 205 240Q215 260 237 235L238 150M175 0Q185 120 210 250M205 0Q210 100 225 250M262 0Q265 90 238 140M185 185Q140 150 142 100L163 85',
      // sitting person
      'M487 0V90Q500 150 530 187Q560 180 575 110Q590 75 620 85Q640 120 638 180Q640 300 620 365M490 140Q480 300 500 330Q530 370 555 345M555 65L537 100M530 205L545 175M573 190L555 390M507 345Q490 430 500 450Q515 460 515 420L527 420M540 350L525 450L636 433Q635 400 615 395L612 365L555 375M550 380L543 445M500 0L548 75L570 0M548 75Q575 20 600 35L610 70',
      'M622 20Q630 160 685 180M750 20Q755 150 720 180L740 188L742 150L725 115M645 65Q650 155 690 163Q725 160 735 110M658 50Q665 0 675 45M702 50Q712 10 719 55M620 240L715 175L740 190Q770 230 767 310Q760 370 745 380L685 423Q640 430 635 330ZM638 175L660 205M657 300V340M665 290V350M673 275V340M682 265V355M692 275V320M702 262V320M715 260V300M724 232V318M733 245V320M741 255V290M748 240V275',
      'M770 60L775 25L790 35L795 60L815 55L818 90L805 98L803 128L788 105L770 95ZM780 225Q790 200 800 205Q810 225 805 245L795 255L803 285Q795 295 790 280Z',
      // croissant
      'M850 80Q855 190 880 203Q890 150 880 110ZM885 105Q900 80 910 95Q915 130 912 160M880 203Q890 230 905 225Q915 240 920 230L940 230L930 175Q920 140 905 155L912 165M905 225L915 150M925 230V160',
      'M1040 65Q1060 100 1063 130Q1060 155 1043 155Q1020 145 1025 110L1035 118Q1045 95 1040 65M1040 120Q1055 120 1052 140',
      'M1080 190L1135 145L1128 85Q1135 80 1138 110V80Q1147 75 1147 95L1155 100L1145 145L1160 190',
      'M1200 20Q1190 80 1210 80Q1240 80 1262 50M1178 85L1262 165M1180 150Q1190 120 1210 155Q1215 200 1232 225M1213 15Q1240 60 1262 165',
      'M1312 0Q1315 100 1360 115Q1420 110 1430 20M1335 115Q1345 140 1380 142L1400 120M1335 90L1340 60L1350 75L1367 40L1385 75L1395 70L1398 100',
      'M848 350L855 290L877 293L872 360M855 310L876 313M824 500L826 430L835 430L834 445',
      'M1017 215Q1025 205 1040 225L1048 240L1028 310Q1018 310 1018 290L1035 250Q1015 255 1017 215M978 380H998L1004 415L998 450H978L972 415Z',
      'M1035 410L1045 402L1055 425L1067 402L1077 410L1068 452L1077 495L1068 503L1055 480L1043 503L1035 492L1045 450Z',
      'M190 415L240 377Q253 375 255 400L262 470Q262 490 255 495L215 530Q205 535 200 520Q187 430 190 415ZM250 400L262 372L275 460L262 468',
      // beach hut
      'M325 510Q330 410 365 335Q385 315 405 340L452 440Q455 470 440 465Q435 475 428 465Q420 480 415 470Q405 485 400 475Q390 490 385 480Q375 495 370 485Q360 500 355 490Q345 505 340 495Q330 520 325 510M300 380Q315 330 350 365M300 380Q330 375 345 380M312 450Q310 390 345 375M410 335Q405 260 438 260Q420 300 412 345Q430 300 457 340Q435 340 415 350Q440 340 462 385M342 505L347 570M372 490L380 560M403 480L408 540M435 470V530M340 575L450 530V555L345 600ZM352 600L357 640M440 560L447 600M333 662Q345 650 355 635Q400 640 430 598Q450 610 470 603',
      'M182 595H212Q225 600 225 615Q222 633 212 633H182Q170 628 171 610Q174 595 182 595ZM185 868H220Q230 875 228 902H180Q172 885 185 868ZM247 868H283Q295 875 292 902H242Q234 885 247 868Z',
      'M303 515Q305 550 318 560Q295 570 291 612Q290 570 275 560Q300 550 303 515ZM627 715Q635 750 652 757Q637 775 635 817Q625 775 608 765Q622 750 627 715ZM277 712L320 690L298 780L293 738ZM1045 735L1080 700L1074 778L1065 745Z',
      'M340 745L445 695Q452 710 447 735L345 785Q335 770 340 745ZM348 825L455 778Q460 800 453 820L352 865Q342 850 348 825',
      // flask
      'M565 570L600 605L598 625H590L578 665V860Q570 870 560 855L497 765Q490 740 500 720L560 625L567 605Z',
      'M615 650Q610 520 640 485Q660 490 660 520Q655 600 630 655Q620 665 615 650M640 500L632 600M668 640Q665 600 700 540Q720 510 738 540Q740 580 710 630Q680 660 668 640M698 555L735 550M725 550L718 610',
      // dancer
      'M780 515L760 520Q755 440 765 405L782 465Q795 470 793 510L825 578Q850 570 865 545L885 545Q870 530 878 460L882 410Q875 350 908 345Q940 360 938 430Q960 450 960 490Q955 530 935 555L985 580L1005 520L1045 545L1042 570L1010 555M760 520L780 610Q800 660 840 650M845 620L825 720M935 575Q950 670 970 668L1000 620M905 765L922 685Q960 800 1010 690M970 755L955 880M1037 575L1055 610L1018 685L990 650ZM1005 665L1015 620L1030 625M888 450L895 440L905 470L900 500M890 560L905 540M918 485L930 430L942 440L930 490',
      'M1083 545L1118 565L1103 633L1077 590ZM1100 545Q1105 515 1117 520Q1120 540 1115 560',
      'M685 905L670 850Q680 830 697 835Q680 720 760 705Q800 710 825 735M700 850Q720 730 770 730M725 905L712 850Q740 760 800 715M775 905Q770 740 800 720M835 740L860 700L865 730L920 780Q925 800 915 805L840 760ZM825 905Q840 800 895 805Q945 820 963 905M835 905Q850 835 895 832Q930 840 945 905M870 840L880 905',
      'M988 870Q985 830 1000 840L1018 788L1025 820Q1045 860 1035 890L1025 905L1015 880L1005 905ZM460 905L475 880L492 890V905'
    ],
    ovals: [
      [1219, 119, 47, 111], [841, 360, 6, 14], [866, 362, 6, 14], [820, 500, 5, 13],
      [376, 748, 13, 36], [420, 812, 13, 36], [565, 660, 10, 22], [562, 735, 15, 42], [914, 515, 16, 32]
    ],
    rings: [
      { r: 6, at: [[283, 237], [178, 307], [479, 492], [551, 533], [241, 612], [479, 684], [210, 747], [246, 747], [310, 885], [839, 238], [947, 302], [980, 252], [808, 385], [696, 480], [764, 633], [687, 711], [929, 60], [1100, 97], [1296, 80]] },
      { r: 10, at: [[101, 75], [291, 98], [231, 307], [591, 510], [608, 890]] },
      { r: 13, at: [[970, 118], [512, 604]] }
    ]
  }
]
</script>

<style>
html,
body {
  background: #101010;
}
</style>

<style scoped>
.phone {
  display: flex;
  flex-direction: column;
  min-height: 100vh;
  background: #101010;
  color: #fff;
  font-family: Inter, "Liberation Sans", sans-serif;
}
p {
  margin: 0;
}
a {
  color: inherit;
  text-decoration: none;
}
button,
select,
input {
  margin: 0;
  padding: 0;
  border: 0;
  background: none;
  color: inherit;
  font: inherit;
}
svg {
  display: block;
  flex: none;
}

/* 顶部 */
.top {
  background: linear-gradient(90deg, #111 30%, #111413);
}
.status {
  display: flex;
  justify-content: space-between;
  height: 160px;
  padding: 0 121px 0 39px;
  box-sizing: border-box;
}
.status-left {
  padding-top: 35px;
}
.clock {
  display: flex;
  align-items: center;
  gap: 16px;
  padding-left: 120px;
  font-size: 52px;
  font-weight: 600;
  line-height: 60px;
}
.bell {
  width: 42px;
  height: 46px;
}
.back-app {
  display: flex;
  align-items: center;
  gap: 12px;
  margin-top: 8px;
  font-size: 33px;
  font-weight: 500;
  line-height: 40px;
}
.back-app svg {
  width: 22px;
  height: 22px;
}
.status-right {
  display: flex;
  align-items: center;
  height: 46px;
  margin-top: 64px;
}
.signal {
  width: 65px;
  height: 42px;
}
.wifi {
  width: 58px;
  height: 42px;
  margin: 0 22px 0 23px;
}
.battery {
  position: relative;
  width: 85px;
  height: 46px;
  border-radius: 14px;
  background: linear-gradient(90deg, #fff 73%, #8b8c8c 73%);
  color: #111;
  font-size: 38px;
  font-weight: 700;
  line-height: 46px;
  text-align: center;
}
.battery::after {
  content: "";
  position: absolute;
  left: 88px;
  top: 16px;
  width: 5px;
  height: 14px;
  border-radius: 0 5px 5px 0;
  background: #8b8c8c;
}
.nav {
  display: flex;
  align-items: center;
  height: 133px;
  padding: 0 95px 2px 39px;
  box-sizing: border-box;
  gap: 73px;
}
.icon-btn svg {
  fill: none;
  stroke: #fafafa;
  stroke-width: 5;
  stroke-linecap: round;
  stroke-linejoin: round;
}
.back {
  display: flex;
  align-items: center;
  gap: 32px;
  font-size: 48px;
  line-height: 60px;
}
.contact {
  position: relative;
  margin-right: auto;
  padding-left: 284px;
}
.scribble {
  position: absolute;
  left: -25px;
  top: -52px;
  width: 410px;
  height: 150px;
}
.avatar-rim {
  fill: none;
  stroke: #2a2618;
  stroke-width: 1;
}
.contact-name {
  position: relative;
  background: linear-gradient(90deg, #333 0, #000 14px, #050505 54px, #333 80px, #fff 100px);
  background-clip: text;
  color: transparent;
  font-size: 46px;
  font-weight: 600;
  line-height: 60px;
}

/* 聊天区 */
.chat {
  position: relative;
  flex: 1;
  overflow: hidden;
  background: #090909;
}
.wallpaper {
  position: absolute;
  inset: 0;
  width: 100%;
  height: 100%;
  fill: none;
  stroke: #232323;
  stroke-width: 3;
  stroke-linecap: round;
  stroke-linejoin: round;
}
.wallpaper path,
.wallpaper ellipse {
  vector-effect: non-scaling-stroke;
}
.wallpaper text {
  font-weight: 600;
  stroke-width: 2;
}
.wallpaper .thin {
  font-weight: 400;
  stroke-width: 1;
}
.day {
  position: relative;
  width: fit-content;
  margin: 38px auto 26px;
  padding: 0 29px;
  border-radius: 26px;
  background: #191919;
  font-size: 38px;
  font-weight: 600;
  line-height: 56px;
}
.message {
  position: relative;
  display: flex;
  align-items: center;
  gap: 26px;
  padding-left: 49px;
}
.bubble {
  position: relative;
  width: 68.5%;
  height: 1344px;
  padding: 10px 11px;
  box-sizing: border-box;
  border-radius: 36px;
  background: #242625;
}
.tail {
  position: absolute;
  left: -18px;
  bottom: 0;
  width: 50px;
  height: 60px;
}
.photo {
  position: relative;
  overflow: hidden;
  border-radius: 28px;
  background: #fff;
  color: #222629;
}
.brand {
  display: grid;
  grid-template-columns: 36% 1fr auto;
  align-items: start;
  height: 33px;
  padding: 0 51px 0 40px;
  box-sizing: border-box;
  border-bottom: 2px solid #c9cacb;
  background: #f6f6f6;
}
.flag {
  width: 68px;
  height: 8px;
  background: linear-gradient(#b5263c 3px, #f6f6f6 3px 5px, #b5263c 5px);
}
.smile {
  width: 82px;
  height: 18px;
}
.scan {
  width: 38px;
  height: 6px;
}
.tabs {
  display: flex;
  height: 82px;
  box-sizing: border-box;
  border-bottom: 2px solid #d3d3d3;
}
.tab {
  height: 83px;
  padding: 5px 20px 0;
  border-bottom: 4px solid transparent;
  box-sizing: border-box;
  color: #2f86d6;
  font-size: 29px;
}
.tab.on {
  border-color: #ee9d20;
  color: #f09c1c;
}
.health {
  display: flex;
  align-items: center;
  gap: 18px;
  height: 99px;
  padding: 0 33px 0 21px;
  box-sizing: border-box;
  border-bottom: 2px solid #dcdcdc;
  font-size: 29px;
  font-weight: 600;
}
.go {
  margin-left: auto;
}
.filters {
  display: grid;
  grid-template-columns: 1fr 1fr;
  padding: 17px 0 0 20px;
}
.filter {
  display: flex;
  align-items: center;
  position: relative;
  width: 290px;
}
.filter + .filter {
  margin-left: 11px;
}
.filter select {
  width: 100%;
  height: 46px;
  appearance: none;
  font-size: 29px;
}
.filter svg {
  position: absolute;
  right: 0;
  pointer-events: none;
}
.metrics {
  display: grid;
  grid-template-columns: repeat(3, 1fr);
  column-gap: 22px;
  padding: 20px 0 0 20px;
}
.figure {
  display: flex;
  align-items: baseline;
  gap: 9px;
  height: 38px;
  line-height: 36px;
}
.figure b {
  font-size: 33px;
  font-weight: 600;
}
.figure small {
  font-size: 22px;
}
.figure svg {
  margin-left: -6px;
}
.figure.up {
  color: #3f9e45;
}
.note {
  color: #97999b;
  font-size: 22px;
  line-height: 28px;
}
.chart {
  display: grid;
  grid-template-columns: 68px 1fr;
  column-gap: 10px;
  padding: 65px 40px 0 0;
  color: #8f9193;
  font-size: 20px;
}
.y-axis {
  display: flex;
  flex-direction: column;
  justify-content: space-between;
  height: 320px;
  margin: -13px 0;
  text-align: right;
  line-height: 24px;
}
.plot {
  position: relative;
  display: flex;
  flex-direction: column;
  justify-content: space-between;
  height: 296px;
}
.line {
  height: 2px;
  background: #c5c6c9;
}
.bars {
  position: absolute;
  inset: 1px 0 0;
  display: flex;
  align-items: flex-end;
}
.bar {
  flex: 1;
  margin: 0 2px;
  background: #ff9d04;
}
.bar.grey {
  background: #c6c5ca;
}
.x-axis {
  grid-column: 2;
  display: flex;
  justify-content: space-between;
  margin: 8px -23px 0;
  line-height: 24px;
}
.x-axis span {
  width: 68px;
  text-align: center;
  white-space: nowrap;
}
.updated {
  padding: 24px 20px 4px;
  color: #66696c;
  font-size: 22px;
  line-height: 30px;
  text-align: right;
}
.cards {
  display: grid;
  grid-template-columns: 1fr 1fr;
  gap: 16px;
  padding: 33px 20px 9px;
  background: #f1f2f4;
}
.card {
  display: flex;
  flex-direction: column;
  height: 148px;
  padding: 20px 20px 0;
  box-sizing: border-box;
  border: 2px solid #d9dbdd;
  border-radius: 8px;
  background: #fff;
  font-family: "Noto Sans", "Open Sans", sans-serif;
  font-size: 23px;
  line-height: 28px;
}
.card a {
  color: #1c71b8;
}
.card strong {
  color: #0a3034;
  font-size: 36px;
  line-height: 44px;
}
.card span {
  margin-top: 4px;
  color: #8b8f92;
}
.photo-scroll {
  position: absolute;
  top: 38px;
  right: 6px;
  bottom: 0;
  width: 6px;
  border-radius: 3px 3px 0 0;
  background: #9c9d9f;
}
.caption {
  padding: 13px 18px 0;
  color: #fafafa;
  font-size: 48px;
  line-height: 66px;
}
.pray {
  display: inline-block;
  width: 62px;
  height: 62px;
  margin: 0 18px;
  vertical-align: -12px;
}
.sent {
  position: absolute;
  right: 32px;
  bottom: 12px;
  color: #8d8f8e;
  font-size: 36px;
  line-height: 48px;
}
.forward {
  display: grid;
  place-items: center;
  width: 96px;
  height: 96px;
  margin-bottom: 170px;
  border-radius: 50%;
  background: #434446;
}
.chat-scroll {
  position: absolute;
  right: 9px;
  bottom: 9px;
  width: 9px;
  height: 21px;
  border-radius: 5px;
  background: #858585;
}

/* 输入栏 */
.bottom {
  padding: 22px 0 24px;
}
.composer {
  display: flex;
  align-items: center;
  padding: 0 51px 0 40px;
}
.field {
  display: flex;
  flex: 1;
  align-items: center;
  min-width: 0;
  height: 90px;
  margin: 0 57px 0 41px;
  padding: 0 33px 0 40px;
  box-sizing: border-box;
  border: 1px solid #3c3c3c;
  border-radius: 45px;
  background: #272727;
}
.field input {
  flex: 1;
  min-width: 0;
  font-size: 48px;
  outline: none;
}
.composer > .icon-btn:last-child {
  margin-left: 57px;
}
.home {
  width: 36%;
  height: 15px;
  margin: 84px auto 0;
  border-radius: 8px;
  background: #fff;
}
</style>
